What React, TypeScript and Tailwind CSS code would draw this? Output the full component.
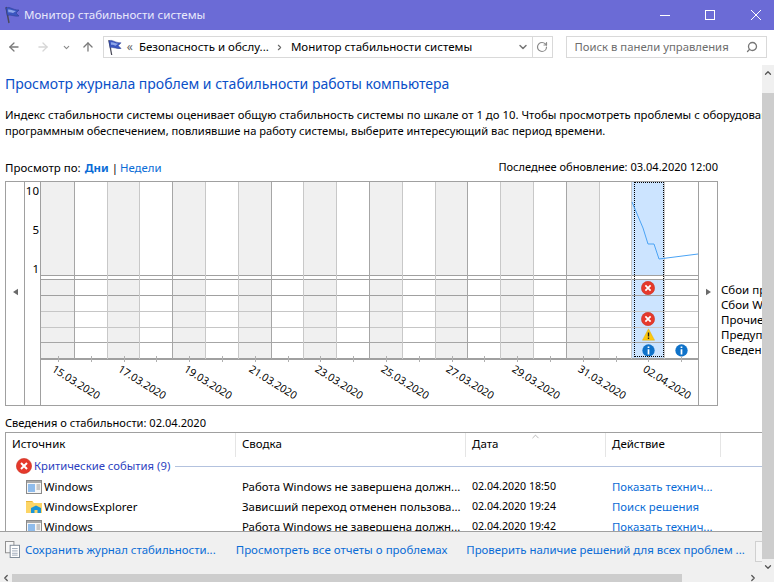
import { ArrowLeft, ArrowRight, ArrowUp, ChevronDown, ChevronUp, ChevronLeft, ChevronRight, RotateCw, Search } from "lucide-react";

const FONT = "font-['Noto_Sans','Open_Sans',sans-serif]";

function Flag({ className }: { className: string }) {
  return (
    <svg viewBox="0 0 16 18" className={className}>
      <path d="M2 1 L5 17" stroke="#4a4a58" strokeWidth="1.4" fill="none" />
      <path d="M2 2 C6 0 8 4 15 4 L12 7 L15 10 C10 11 7 8 3.4 9.5 Z" fill="#3a56c0" stroke="#27398c" strokeWidth="0.5" />
      <path d="M4 3.5 C7 3 9 5 12 5 L9 7 C7 6 5 6 4.4 6.4 Z" fill="#8ea6ea" />
    </svg>
  );
}

function ErrorIcon({ size = "w-[14px] h-[14px]" }: { size?: string }) {
  return (
    <svg viewBox="0 0 16 16" className={size}>
      <circle cx="8" cy="8" r="7.6" fill="#e5392c" stroke="#c9301f" strokeWidth="0.6" />
      <path d="M5 5 L11 11 M11 5 L5 11" stroke="#fff" strokeWidth="2" />
    </svg>
  );
}

function WarnIcon() {
  return (
    <svg viewBox="0 0 16 16" className="w-[13px] h-[13px]">
      <path d="M8 1 L15.5 15 H0.5 Z" fill="#fdc80f" stroke="#e0a800" strokeWidth="0.5" />
      <path d="M8 5.5 V10.5 M8 11.7 V13.4" stroke="#222" strokeWidth="1.7" />
    </svg>
  );
}

function InfoIcon() {
  return (
    <svg viewBox="0 0 16 16" className="w-[13px] h-[13px]">
      <circle cx="8" cy="8" r="7.6" fill="#0f72c9" />
      <path d="M8 3 V5 M8 6.4 V13" stroke="#fff" strokeWidth="2.1" />
    </svg>
  );
}

function WinIcon() {
  return (
    <svg viewBox="0 0 16 14" className="w-[16px] h-[14px] shrink-0">
      <rect x="0.5" y="0.5" width="15" height="13" fill="#f6f6f6" stroke="#8a8a8a" />
      <rect x="1" y="1" width="14" height="2" fill="#a9a9a9" />
      <rect x="2" y="4" width="7" height="8" fill="#8fbcec" />
      <path d="M10.5 5 H14 M10.5 7 H14 M10.5 9 H14" stroke="#999" />
    </svg>
  );
}

function FolderIcon() {
  return (
    <svg viewBox="0 0 16 14" className="w-[16px] h-[14px] shrink-0">
      <path d="M0 1 H6 L8 3 H16 V13 H0 Z" fill="#fcd566" />
      <path d="M0 1 H6 L7 2 H0 Z" fill="#e9b63a" />
      <path d="M5 13 V8 L10 5.5 L15 8 V13 Z" fill="#1a94d8" />
      <rect x="8.5" y="10" width="3" height="3" fill="#fcd566" />
    </svg>
  );
}

function DocsIcon() {
  return (
    <svg viewBox="0 0 16 18" className="w-[15px] h-[17px] shrink-0">
      <rect x="0.5" y="0.5" width="9" height="12" fill="#f7f7f7" stroke="#8c8c8c" />
      <rect x="5.5" y="4.5" width="10" height="13" fill="#fff" stroke="#7b8794" />
      <path d="M7.5 8 H13.5 M7.5 10.5 H13.5 M7.5 13 H13.5 M7.5 15 H13.5" stroke="#9aa5b5" />
    </svg>
  );
}

const rowLines = ["border-b-[#a0a0a0]", "border-b-[#c6c6c6]", "border-b-[#c6c6c6]", "border-b-[#a6a6a6]", "border-b-[#a0a0a0]"];
const darkCols = [0, 3, 6, 9, 12, 15];

function Column({ index }: { index: number }) {
  const selected = index === 18;
  const gray = index % 2 === 0 && !selected;
  const bg = selected ? "bg-[#cce4ff]" : gray ? "bg-[#f0f0f0]" : "bg-white";
  const line = darkCols.includes(index) ? "border-r-[#a6a6a6]" : "border-r-[#c8c8c8]";
  const width = index === 0 ? "w-[33.9px]" : index === 19 ? "w-[32.7px]" : "w-[32.8px]";
  const icons: Record<number, React.ReactNode> = selected
    ? { 0: <ErrorIcon />, 2: <ErrorIcon />, 3: <WarnIcon />, 4: <InfoIcon /> }
    : index === 19
      ? { 4: <InfoIcon /> }
      : {};
  return (
    <div className={`relative flex flex-col ${width} shrink-0 ${index === 19 ? "" : `border-r ${line}`}`}>
      <div className={`h-[95px] border-b border-b-[#a0a0a0] ${bg}`} />
      <div className="h-[4px] border-b border-b-[#a0a0a0] bg-white" />
      {rowLines.map((l, r) => (
        <div key={r} className={`h-[15.8px] flex items-center justify-center border-b ${l} ${bg} relative`}>
          {icons[r]}
        </div>
      ))}
      <div className={`absolute top-[174px] w-px h-[6px] bg-[#b0b0b0] ${index === 0 ? "left-[17px]" : "left-[16px]"}`} />
      {selected && <div className="absolute left-[2px] top-0 h-[175px] w-[30px] border border-dotted border-black pointer-events-none" />}
    </div>
  );
}

const dates = ["15.03.2020", "17.03.2020", "19.03.2020", "21.03.2020", "23.03.2020", "25.03.2020", "27.03.2020", "29.03.2020", "31.03.2020", "02.04.2020"];
const legend = ["Сбои приложений", "Сбои Windows", "Прочие сбои", "Предупреждения", "Сведения"];

const rows = [
  { icon: <WinIcon />, src: "Windows", sum: "Работа Windows не завершена должн...", date: "02.04.2020 18:50", act: "Показать технич..." },
  { icon: <FolderIcon />, src: "WindowsExplorer", sum: "Зависший переход отменен пользова...", date: "02.04.2020 19:24", act: "Поиск решения" },
  { icon: <WinIcon />, src: "Windows", sum: "Работа Windows не завершена должн...", date: "02.04.2020 19:42", act: "Показать технич..." },
];

export default function App() {
  return (
    <div className={`${FONT} w-[774px] h-[582px] flex flex-col overflow-hidden bg-white text-[11.4px] text-black`}>
      {/* title bar */}
      <div className="h-[30px] shrink-0 bg-[#6b6bd6] flex items-center pl-[4px] text-[#e9e9fb]">
        <Flag className="w-[16px] h-[18px]" />
        <span className="ml-[4px] text-[11.55px]">Монитор стабильности системы</span>
        <div className="ml-auto flex items-center text-white">
          <svg viewBox="0 0 10 10" className="w-[10px] h-[10px] mr-[35px]"><path d="M0 5.5 H10" stroke="#fff" /></svg>
          <svg viewBox="0 0 10 10" className="w-[10px] h-[10px] mr-[36px]"><rect x="0.5" y="0.5" width="9" height="9" fill="none" stroke="#fff" /></svg>
          <svg viewBox="0 0 10 10" className="w-[10px] h-[10px] mr-[13px]"><path d="M0 0 L10 10 M10 0 L0 10" stroke="#fff" /></svg>
        </div>
      </div>
      {/* nav */}
      <div className="h-[35px] shrink-0 flex items-center pb-[1px] pl-[7px] pr-[7px]">
        <ArrowLeft className="w-[14px] h-[14px] text-[#7a7a7a]" strokeWidth={2.2} />
        <ArrowRight className="w-[14px] h-[14px] text-[#d6d6d6] ml-[15px]" strokeWidth={2.2} />
        <ChevronDown className="w-[9px] h-[9px] text-[#8a8a8a] ml-[12px]" strokeWidth={3} />
        <ArrowUp className="w-[14px] h-[14px] text-[#7a7a7a] ml-[10px]" strokeWidth={2.2} />
        <div className="ml-[8px] w-[451px] h-[22px] border border-[#d9d9d9] flex items-center">
          <Flag className="w-[15px] h-[17px] ml-[3px] shrink-0" />
          <span className="ml-[5px] text-[#666] text-[12px] leading-none">«</span>
          <span className="ml-[6px] whitespace-nowrap text-[11.5px]">Безопасность и обслу...</span>
          <ChevronRight className="w-[9px] h-[9px] ml-[6px] text-[#666]" strokeWidth={3} />
          <span className="ml-[7px] whitespace-nowrap text-[11.55px]">Монитор стабильности системы</span>
          <ChevronDown className="w-[12px] h-[12px] ml-auto mr-[3px] text-[#777]" strokeWidth={3} />
          <div className="h-full w-[20px] border-l border-[#d9d9d9] flex items-center justify-center">
            <RotateCw className="w-[12px] h-[12px] text-[#8a8a8a]" strokeWidth={2.4} />
          </div>
        </div>
        <div className="ml-[13px] w-[202px] h-[22px] border border-[#d9d9d9] flex items-center pl-[8px] pr-[8px] text-[#6d6d6d]">
          <span className="whitespace-nowrap text-[11.3px]">Поиск в панели управления</span>
          <Search className="w-[12px] h-[12px] ml-auto text-[#777] -scale-x-100" strokeWidth={2.6} />
        </div>
      </div>
      {/* body */}
      <div className="flex-1 min-h-0 flex">
        <div className="flex-1 min-w-0 flex flex-col overflow-hidden">
          <div className="h-[29px] shrink-0 flex items-end pl-[5px]">
            <h1 className="text-[14px] leading-[20px] text-[#0a50c8] font-normal whitespace-nowrap">Просмотр журнала проблем и стабильности работы компьютера</h1>
          </div>
          <div className="mt-[13px] pl-[5px] leading-[15.5px] whitespace-nowrap text-[11.15px]">
            <p className="text-[11.37px]">Индекс стабильности системы оценивает общую стабильность системы по шкале от 1 до 10. Чтобы просмотреть проблемы с оборудованием и</p>
            <p>программным обеспечением, повлиявшие на работу системы, выберите интересующий вас период времени.</p>
          </div>
          <div className="mt-[21px] h-[17px] flex items-center pl-[5px] w-[718px] whitespace-nowrap">
            <span className="text-[11.5px]">Просмотр по:</span>
            <span className="ml-[4px] font-bold text-[#0a6cd6]">Дни</span>
            <span className="ml-[3px] mr-[2px]">|</span>
            <span className="text-[#0a6cd6]">Недели</span>
            <span className="ml-auto text-[11.05px]">Последнее обновление: 03.04.2020 12:00</span>
          </div>
          {/* chart */}
          <div className="mt-[5px] pl-[5px] flex">
            <div className="w-[713px] h-[225px] shrink-0 border border-[#a0a0a0] flex">
              <div className="w-[19px] shrink-0 border-r border-[#a0a0a0] flex items-start justify-center pt-[106px]">
                <svg viewBox="0 0 6 8" className="w-[5px] h-[8px]"><path d="M6 0 V8 L0 4 Z" fill="#6a6a6a" /></svg>
              </div>
              <div className="w-[16px] shrink-0 border-r border-[#a0a0a0] flex flex-col items-end gap-[23px] pt-[1px] pr-[1px] text-right leading-[16px] text-[11.5px]">
                <span>10</span>
                <span>5</span>
                <span>1</span>
              </div>
              <div className="w-[657px] shrink-0 flex flex-col relative">
                <div className="flex h-[178px] border-b border-b-[#a0a0a0]">
                  {Array.from({ length: 20 }, (_, i) => <Column key={i} index={i} />)}
                </div>
                <svg className="absolute left-0 top-0 w-[657px] h-[95px]" viewBox="0 0 657 95">
                  <polyline points="591,20 602,46 607,62 613,62 618,77 657,72" fill="none" stroke="#4aa3f5" strokeWidth="1" />
                </svg>
                <div className="flex-1 flex">
                  {dates.map((d) => (
                    <div key={d} className="w-[65.7px] shrink-0 flex items-center justify-center">
                      <span className="rotate-[32deg] ml-[5px] whitespace-nowrap text-[10.6px] leading-none">{d}</span>
                    </div>
                  ))}
                </div>
              </div>
              <div className="flex-1 border-l border-[#a0a0a0] flex items-start justify-center pt-[106px]">
                <svg viewBox="0 0 6 8" className="w-[5px] h-[8px]"><path d="M0 0 V8 L6 4 Z" fill="#6a6a6a" /></svg>
              </div>
            </div>
            <div className="ml-[3px] pt-[101px] leading-[15.1px] whitespace-nowrap text-[11.5px]">
              {legend.map((l) => <div key={l}>{l}</div>)}
            </div>
          </div>
          <div className="mt-[8px] pl-[5px] h-[17px] leading-[17px] text-[11.1px]">Сведения о стабильности: 02.04.2020</div>
          {/* list */}
          <div className="relative ml-[5px] mt-[1px] flex-1 min-h-0 overflow-hidden border-l border-t border-[#a0a0a0]">
            <div className="flex h-[24px] items-center text-[11.5px]">
              <div className="w-[230px] h-full flex items-center pl-[6px] pb-[2px] border-r border-[#e5e5e5]">Источник</div>
              <div className="w-[230px] h-full flex items-center pl-[6px] pb-[2px] border-r border-[#e5e5e5]">Сводка</div>
              <div className="w-[140px] h-full flex items-center pl-[6px] pb-[2px] border-r border-[#e5e5e5]">Дата</div>
              <div className="w-[115px] h-full flex items-center pl-[6px] pb-[2px] border-r border-[#e5e5e5]">Действие</div>
            </div>
            <ChevronUp className="absolute left-[524px] -top-[2px] w-[11px] h-[11px] text-[#999]" strokeWidth={1.5} />
            <div className="h-[20px] flex items-center pl-[10px] pb-[2px] text-[#2c3fc0]">
              <ErrorIcon size="w-[16px] h-[16px] shrink-0" />
              <span className="ml-[2px] whitespace-nowrap text-[11.3px]">Критические события (9)</span>
              <div className="ml-[5px] flex-1 h-px bg-[#b3c2de]" />
            </div>
            {rows.map((r, i) => (
              <div key={i} className="flex h-[20px] items-center whitespace-nowrap">
                <div className="w-[230px] shrink-0 flex items-center pl-[20px]">
                  {r.icon}
                  <span className="ml-[2px]">{r.src}</span>
                </div>
                <div className="w-[230px] shrink-0 pl-[6px]">{r.sum}</div>
                <div className="w-[140px] shrink-0 pl-[6px] text-[10.6px]">{r.date}</div>
                <div className="pl-[6px] text-[#0a6cd6]">{r.act}</div>
              </div>
            ))}
          </div>
          {/* footer */}
          <div className="h-[43px] shrink-0 bg-[#f0f0f0] border-t border-[#a0a0a0] flex items-start pt-[9px] pl-[5px] whitespace-nowrap text-[#0a6cd6] overflow-hidden">
            <DocsIcon />
            <span className="ml-[5px]">Сохранить журнал стабильности...</span>
            <span className="ml-[20px] text-[11.5px]">Просмотреть все отчеты о проблемах</span>
            <span className="ml-[19px]">Проверить наличие решений для всех проблем ...</span>
            <div className="ml-[10px] w-[20px] h-[21px] border border-[#d0d0d0] bg-[#f5f5f5] shrink-0" />
          </div>
        </div>
        {/* vertical scrollbar */}
        <div className="w-[12px] shrink-0 flex flex-col items-center bg-[#f0f0f0]">
          <div className="h-[28px] flex items-start pt-[3px]"><ChevronUp className="w-[10px] h-[10px] text-[#555]" strokeWidth={3} /></div>
          <div className="flex-1 self-stretch bg-[#cdcdcd]" />
          <div className="h-[15px] flex items-center"><ChevronDown className="w-[10px] h-[10px] text-[#555]" strokeWidth={3} /></div>
        </div>
      </div>
      {/* horizontal scrollbar */}
      <div className="h-[8px] shrink-0 flex items-center bg-[#f0f0f0] overflow-hidden">
        <div className="w-[12px] flex justify-center"><ChevronLeft className="w-[10px] h-[10px] text-[#555]" strokeWidth={3} /></div>
        <div className="w-[670px] h-full bg-[#cdcdcd]" />
        <ChevronRight className="w-[10px] h-[10px] ml-[66px] text-[#555]" strokeWidth={3} />
      </div>
    </div>
  );
}
